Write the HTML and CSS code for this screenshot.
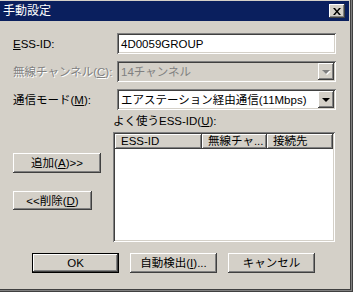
FILE: index.html
```html
<!DOCTYPE html>
<html lang="ja">
<head>
  <meta charset="utf-8">
  <title>手動設定</title>
  <link rel="stylesheet" href="styles.css">
</head>
<body>
  <div class="window">
    <div class="titlebar">
      <span class="title">手動設定</span>
      <button class="close" type="button" aria-label="閉じる">
        <svg width="8" height="7" viewBox="0 0 8 7"><path d="M0 0h2l2 2.5L6 0h2L5 3.5 8 7H6L4 4.5 2 7H0l3-3.5z" fill="#000"/></svg>
      </button>
    </div>

    <div class="content">
      <div class="form-grid">
        <label class="label"><u>E</u>SS-ID:</label>
        <div class="field">4D0059GROUP</div>

        <label class="label label-disabled">無線チャンネル(<u>C</u>):</label>
        <div class="field combo combo-disabled">
          <span class="combo-text">14チャンネル</span>
          <span class="combo-arrow"><i class="arrow"></i></span>
        </div>

        <label class="label">通信モード(<u>M</u>):</label>
        <div class="field combo">
          <span class="combo-text">エアステーション経由通信(11Mbps)</span>
          <span class="combo-arrow"><i class="arrow"></i></span>
        </div>
      </div>

      <div class="lower">
        <div class="side-buttons">
          <button class="button button-add" type="button">追加(<u>A</u>)&gt;&gt;</button>
          <button class="button button-del" type="button">&lt;&lt;削除(<u>D</u>)</button>
        </div>
        <div class="list-block">
          <p class="list-title">よく使うESS-ID(<u>U</u>):</p>
          <div class="listview">
            <div class="list-header">
              <span class="col col-id">ESS-ID</span>
              <span class="col col-ch">無線チャ...</span>
              <span class="col col-to">接続先</span>
            </div>
          </div>
        </div>
      </div>

      <div class="footer">
        <button class="button button-default" type="button">OK</button>
        <button class="button" type="button">自動検出(<u>I</u>)...</button>
        <button class="button" type="button">キャンセル</button>
      </div>
    </div>
  </div>
</body>
</html>
```

FILE: styles.css
```css
*, *::before, *::after {
  margin: 0;
  padding: 0;
  box-sizing: border-box;
}

body {
  width: 353px;
  height: 292px;
  overflow: hidden;
  background-color: #D4D0C8;
  color: #000000;
  font-family: "Liberation Sans", "Noto Sans CJK JP", sans-serif;
  font-size: 11.5px;
  line-height: 14px;
}

u {
  text-decoration: underline;
  text-underline-offset: 1px;
}

.window {
  width: 353px;
  height: 292px;
  padding-top: 1px;
  background-color: #D4D0C8;
  border-right: 1px solid #404040;
  border-bottom: 1px solid #404040;
  box-shadow: inset -1px -1px #808080, inset -2px -2px #404040, inset -3px -3px #D4D0C8;
}

.titlebar {
  display: flex;
  align-items: center;
  justify-content: space-between;
  height: 20px;
  margin-right: 3px;
  padding: 0 4px 0 3px;
  background-color: #0A1F5E;
}

.title {
  color: #FFFFFF;
  font-size: 12px;
}

.close {
  display: flex;
  align-items: center;
  justify-content: center;
  width: 16px;
  height: 14px;
  border: none;
  background-color: #D4D0C8;
  box-shadow: inset -1px -1px #404040, inset 1px 1px #FFFFFF, inset -2px -2px #808080;
}

.content {
  padding: 12px 17px 0 13px;
}

.form-grid {
  display: grid;
  grid-template-columns: 104px 219px;
  grid-auto-rows: 21px;
  row-gap: 7px;
  align-items: center;
}

.label-disabled {
  color: #808080;
  text-shadow: 1px 1px #FFFFFF;
}

.field {
  display: flex;
  align-items: center;
  height: 21px;
  padding: 0 4px;
  background-color: #FFFFFF;
  box-shadow: inset 1px 1px #808080, inset -1px -1px #FFFFFF, inset 2px 2px #404040, inset -2px -2px #D4D0C8;
}

.combo {
  padding-right: 2px;
  justify-content: space-between;
}

.combo-disabled {
  background-color: #D4D0C8;
  color: #808080;
}

.combo-text {
  white-space: nowrap;
}

.combo-arrow {
  display: flex;
  align-items: center;
  justify-content: center;
  width: 16px;
  height: 17px;
  background-color: #D4D0C8;
  box-shadow: inset -1px -1px #404040, inset 1px 1px #FFFFFF, inset -2px -2px #808080;
}

.arrow {
  width: 0;
  height: 0;
  border-left: 4px solid transparent;
  border-right: 4px solid transparent;
  border-top: 4px solid #000000;
}

.combo-disabled .arrow {
  border-top-color: #808080;
  filter: drop-shadow(1px 1px 0 #FFFFFF);
}

.lower {
  display: flex;
  margin-top: 4px;
}

.side-buttons {
  display: flex;
  flex-direction: column;
  align-items: flex-start;
  gap: 18px;
  width: 100px;
  padding-top: 39px;
}

.button {
  height: 20px;
  border: none;
  background-color: #D4D0C8;
  color: #000000;
  font-family: inherit;
  font-size: 11.5px;
  line-height: 14px;
  box-shadow: inset -1px -1px #404040, inset 1px 1px #FFFFFF, inset -2px -2px #808080;
}

.button-add {
  width: 88px;
}

.button-del {
  width: 79px;
  height: 19px;
}

.list-title {
  margin-bottom: 4px;
}

.listview {
  width: 222px;
  height: 110px;
  padding: 2px;
  background-color: #FFFFFF;
  box-shadow: inset 1px 1px #808080, inset -1px -1px #FFFFFF, inset 2px 2px #404040, inset -2px -2px #D4D0C8;
}

.list-header {
  display: flex;
  height: 15px;
}

.col {
  padding-left: 6px;
  background-color: #D4D0C8;
  line-height: 15px;
  white-space: nowrap;
  overflow: hidden;
  box-shadow: inset -1px -1px #404040, inset 1px 1px #FFFFFF, inset -2px -2px #808080;
}

.col-id {
  width: 87px;
}

.col-ch {
  width: 65px;
}

.col-to {
  width: 66px;
}

.footer {
  display: flex;
  gap: 11px;
  margin-top: 11px;
  padding-left: 19px;
}

.footer .button {
  width: 87px;
}

.button-default {
  border: 1px solid #000000;
}
```
